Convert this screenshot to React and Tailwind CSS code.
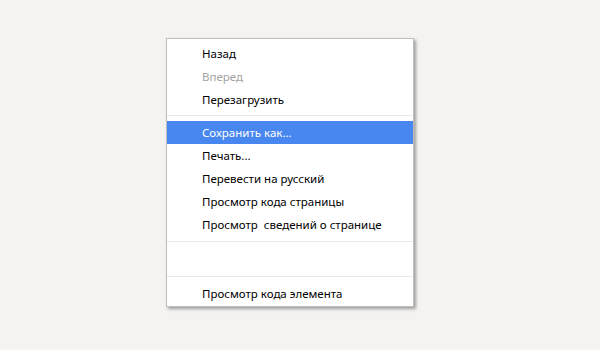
import React from 'react';

const Item = ({ label, disabled, active }) => (
  <div
    className={`h-[23px] flex items-center pl-[35px] text-[11.5px] leading-none whitespace-pre ${
      active ? 'bg-[#4886f0] text-white' : disabled ? 'text-[#a3a3a3]' : 'text-black'
    }`}
  >
    {label}
  </div>
);

const Sep = ({ top = 4, bottom = 5 }) => (
  <div className={top === 4 ? 'pt-[4px] pb-[5px]' : 'pt-[5px] pb-[5px]'}>
    <div className="h-px bg-[#e9e9e9]" />
  </div>
);

export default function App() {
  return (
    <div
      className="w-[600px] h-[350px] bg-[#f4f3f1] pt-[38px] pl-[166px]"
      style={{ fontFamily: '"Noto Sans", "Open Sans", sans-serif' }}
    >
      <div className="w-[248px] bg-white border border-[#bdbdbd] pt-[3px] pb-[1px] shadow-[2px_2px_3px_rgba(0,0,0,0.35)]">
        <Item label="Назад" />
        <Item label="Вперед" disabled />
        <Item label="Перезагрузить" />
        <Sep />
        <Item label="Сохранить как..." active />
        <Item label="Печать..." />
        <Item label="Перевести на русский" />
        <Item label="Просмотр кода страницы" />
        <Item label="Просмотр  сведений о странице" />
        <Sep top={5} />
        <div className="h-[29px]" />
        <div className="h-px bg-[#e9e9e9]" />
        <div className="h-[5px]" />
        <Item label="Просмотр кода элемента" />
      </div>
    </div>
  );
}
